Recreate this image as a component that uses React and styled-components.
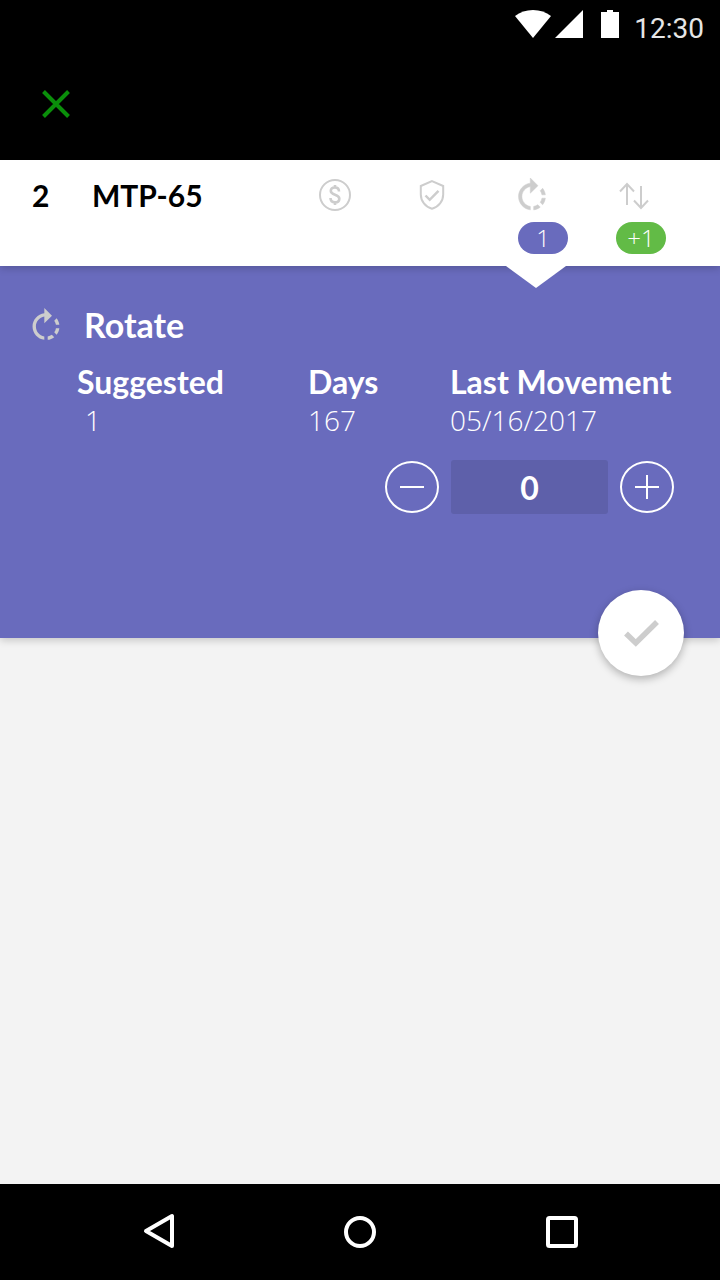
import React, { useState } from "react";
import styled, { createGlobalStyle } from "styled-components";

const GlobalStyle = createGlobalStyle`
  *, *::before, *::after { box-sizing: border-box; }
  body {
    margin: 0;
    background: #f3f3f3;
    font-family: Lato, "Open Sans", sans-serif;
  }
  button { font: inherit; color: inherit; background: none; border: 0; padding: 0; margin: 0; cursor: pointer; }
  svg { display: block; flex: none; overflow: visible; }
`;

const Screen = styled.div`
  display: flex;
  flex-direction: column;
  min-height: 100vh;
`;

const StatusBar = styled.div`
  display: flex;
  justify-content: flex-end;
  height: 48px;
  padding: 10px 16px 0 0;
  background: #000;
  color: #fff;
`;

const Clock = styled.time`
  margin-left: 15px;
  font: 400 28px/38px Roboto, sans-serif;
  color: #e6e6e6;
`;

const StatusIcon = styled.svg`
  margin-left: ${(p) => p.$gap || 0}px;
`;

const AppBar = styled.header`
  display: flex;
  align-items: center;
  height: 112px;
  padding: 0 40px;
  background: #000;
  color: #0a8f0a;
`;

const IconButton = styled.button`
  display: grid;
  place-items: center;
  width: 32px;
  height: 32px;
`;

const ItemBar = styled.section`
  position: relative;
  z-index: 1;
  display: grid;
  grid-template-columns: 60px 1fr 97px 102px 98px 104px;
  height: 106px;
  padding: 16px 0 12px 32px;
  background: #fff;
  box-shadow: 0 2px 8px rgba(0, 0, 0, 0.2);
`;

const ItemText = styled.span`
  font-size: 30px;
  line-height: 38px;
  font-weight: 700;
  color: #000;
`;

const Tab = styled.button`
  position: relative;
  display: flex;
  flex-direction: column;
  align-items: flex-start;
  gap: 8px;
  color: #cdcdcd;
`;

const TabIcon = styled.span`
  display: flex;
  align-items: center;
  height: 38px;
`;

const Badge = styled.span`
  width: 50px;
  height: 32px;
  border-radius: 16px;
  background: ${(p) => p.$color};
  color: #fff;
  font-family: "Open Sans", sans-serif;
  font-size: 24px;
  line-height: 32px;
  font-weight: 300;
  text-align: center;
`;

const Pointer = styled.span`
  position: absolute;
  top: 90px;
  left: -12px;
  width: 60px;
  height: 22px;
  background: #fff;
  clip-path: polygon(0 0, 100% 0, 50% 100%);
`;

const Panel = styled.main`
  position: relative;
  padding: 38px 46px 124px 32px;
  background: #696bbd;
  color: #fff;
  box-shadow: 0 2px 8px rgba(0, 0, 0, 0.2);
`;

const PanelHead = styled.div`
  display: flex;
  align-items: center;
  gap: 24px;
  height: 42px;
  color: #cdcdcd;
`;

const PanelTitle = styled.h1`
  margin: 0;
  font-size: 34px;
  line-height: 42px;
  font-weight: 700;
  color: #fff;
`;

const Facts = styled.dl`
  display: grid;
  grid-template-columns: 231fr 142fr 224px;
  margin: 16px 0 0 45px;
`;

const FactName = styled.dt`
  font-size: 32px;
  line-height: 40px;
  font-weight: 700;
  white-space: nowrap;
`;

const FactValue = styled.dd`
  margin: 0;
  padding-left: ${(p) => p.$indent || 0}px;
  font-family: "Open Sans", sans-serif;
  font-size: 28px;
  line-height: 36px;
  font-weight: 300;
`;

const Stepper = styled.div`
  display: flex;
  align-items: center;
  justify-content: flex-end;
  gap: 12px;
  margin-top: 22px;
`;

const StepButton = styled.button`
  display: grid;
  place-items: center;
  width: 54px;
  height: 52px;
  border: 2px solid #fff;
  border-radius: 50%;
`;

const Quantity = styled.input`
  width: 157px;
  height: 54px;
  padding: 0;
  border: 0;
  border-radius: 3px;
  background: #5e60aa;
  color: #fff;
  font-family: inherit;
  font-size: 32px;
  font-weight: 700;
  text-align: center;
`;

const ConfirmButton = styled.button`
  position: absolute;
  right: 36px;
  bottom: -38px;
  display: grid;
  place-items: center;
  width: 86px;
  height: 86px;
  border-radius: 50%;
  background: #fff;
  color: #cdcdcd;
  box-shadow: 0 3px 8px rgba(0, 0, 0, 0.28);
`;

const NavBar = styled.nav`
  display: flex;
  align-items: center;
  justify-content: space-between;
  height: 96px;
  margin-top: auto;
  padding: 0 19.75%;
  background: #000;
`;

const RotateIcon = ({ bold }) => (
  <svg width="28" height="34" viewBox="3.7 1 16.6 20.2" fill="currentColor" stroke="currentColor" strokeWidth={bold ? 0.3 : 0} aria-hidden="true">
    <path d="M15.55 5.55 11 1v3.07C7.06 4.56 4 7.92 4 12s3.05 7.44 7 7.93v-2.02c-2.84-.48-5-2.94-5-5.91s2.16-5.43 5-5.91V10l4.55-4.45zM19.93 11c-.17-1.39-.72-2.73-1.62-3.89l-1.42 1.42c.54.75.88 1.6 1.02 2.47h2.02zM13 17.9v2.02c1.39-.17 2.74-.71 3.9-1.61l-1.44-1.44c-.75.54-1.59.89-2.46 1.03zm3.89-2.42 1.42 1.41c.9-1.16 1.45-2.5 1.62-3.89h-2.02c-.14.87-.48 1.72-1.02 2.48z" />
  </svg>
);

export default function App() {
  const [quantity, setQuantity] = useState(0);
  return (
    <Screen>
      <GlobalStyle />
      <StatusBar>
        <StatusIcon width="36" height="28" viewBox="0 0 36 28" fill="#fff" aria-hidden="true">
          <path d="M0 6C5 2 11 0 18 0s13 2 18 6L18 28z" />
        </StatusIcon>
        <StatusIcon $gap={4} width="28" height="28" viewBox="0 0 28 28" fill="#fff" aria-hidden="true">
          <path d="M28 0v28H0z" />
        </StatusIcon>
        <StatusIcon $gap={18} width="18" height="28" viewBox="0 0 18 28" fill="#fff" aria-hidden="true">
          <path d="M6 0h6v2h6v26H0V2h6z" />
        </StatusIcon>
        <Clock>12:30</Clock>
      </StatusBar>
      <AppBar>
        <IconButton aria-label="Close">
          <svg width="30" height="30" viewBox="0 0 30 30" fill="none" stroke="currentColor" strokeWidth="4" aria-hidden="true">
            <path d="M2.500 2.500l25 25M27.500 2.500l-25 25" />
          </svg>
        </IconButton>
      </AppBar>
      <ItemBar>
        <ItemText>2</ItemText>
        <ItemText>MTP-65</ItemText>
        <Tab aria-label="Price">
          <TabIcon>
            <svg width="32" height="32" viewBox="0 0 32 32" fill="none" stroke="currentColor" strokeWidth="2" aria-hidden="true">
              <circle cx="16" cy="16" r="15" />
              <path strokeWidth="2.600" d="M20 12.500c0-2.600-1.600-4-4.100-4s-4.100 1.400-4.100 3.600c0 4.700 8.500 2.700 8.500 7.600 0 2.300-1.700 3.700-4.300 3.700s-4.500-1.600-4.500-4.300M16 6v3M16 23v3" />
            </svg>
          </TabIcon>
        </Tab>
        <Tab aria-label="Protection">
          <TabIcon>
            <svg width="32" height="32" viewBox="0 0 32 32" fill="none" stroke="currentColor" strokeWidth="2" aria-hidden="true">
              <path d="M16 2.200L27.200 7v8.500c0 6.500-4.600 12.500-11.200 14.300C9.400 28 4.800 22 4.800 15.500V7z" />
              <path strokeWidth="2.500" d="M9.500 16.500l4.200 4.300 8.800-9" />
            </svg>
          </TabIcon>
        </Tab>
        <Tab aria-label="Rotate">
          <TabIcon><RotateIcon bold /></TabIcon>
          <Badge $color="#696bbd">1</Badge>
          <Pointer />
        </Tab>
        <Tab aria-label="Movement">
          <TabIcon>
            <svg width="36" height="28" viewBox="0 0 36 28" fill="none" stroke="currentColor" strokeWidth="2" aria-hidden="true">
              <path d="M11 24V3M4 10.500L11 3l7 7.500M25 5v22M18 19.500l7 7.500 7-7.500" />
            </svg>
          </TabIcon>
          <Badge $color="#62bb46">+1</Badge>
        </Tab>
      </ItemBar>
      <Panel>
        <PanelHead>
          <RotateIcon />
          <PanelTitle>Rotate</PanelTitle>
        </PanelHead>
        <Facts>
          <div>
            <FactName>Suggested</FactName>
            <FactValue $indent={8}>1</FactValue>
          </div>
          <div>
            <FactName>Days</FactName>
            <FactValue>167</FactValue>
          </div>
          <div>
            <FactName>Last Movement</FactName>
            <FactValue>05/16/2017</FactValue>
          </div>
        </Facts>
        <Stepper>
          <StepButton aria-label="Decrease" onClick={() => setQuantity((n) => Number(n) - 1)}>
            <svg width="24" height="24" viewBox="0 0 24 24" stroke="currentColor" strokeWidth="2" aria-hidden="true">
              <path d="M0 12h24" />
            </svg>
          </StepButton>
          <Quantity aria-label="Quantity" value={quantity} onChange={(e) => setQuantity(e.target.value)} />
          <StepButton aria-label="Increase" onClick={() => setQuantity((n) => Number(n) + 1)}>
            <svg width="24" height="24" viewBox="0 0 24 24" stroke="currentColor" strokeWidth="2" aria-hidden="true">
              <path d="M0 12h24M12 0v24" />
            </svg>
          </StepButton>
        </Stepper>
        <ConfirmButton aria-label="Confirm">
          <svg width="36" height="28" viewBox="0 0 36 28" fill="none" stroke="currentColor" strokeWidth="5.500" aria-hidden="true">
            <path d="M3 14.500l9.800 9.500L34 3" />
          </svg>
        </ConfirmButton>
      </Panel>
      <NavBar>
        <IconButton aria-label="Back">
          <svg width="32" height="32" viewBox="0 0 32 32" fill="none" stroke="#fff" strokeWidth="4" strokeLinejoin="round" aria-hidden="true">
            <path d="M30 0v30L4 15z" />
          </svg>
        </IconButton>
        <IconButton aria-label="Home">
          <svg width="32" height="32" viewBox="0 0 32 32" fill="none" stroke="#fff" strokeWidth="4" aria-hidden="true">
            <circle cx="16" cy="16" r="14" />
          </svg>
        </IconButton>
        <IconButton aria-label="Recent apps">
          <svg width="32" height="32" viewBox="0 0 32 32" fill="none" stroke="#fff" strokeWidth="4" aria-hidden="true">
            <rect x="2" y="2" width="28" height="28" rx="1.500" />
          </svg>
        </IconButton>
      </NavBar>
    </Screen>
  );
}
